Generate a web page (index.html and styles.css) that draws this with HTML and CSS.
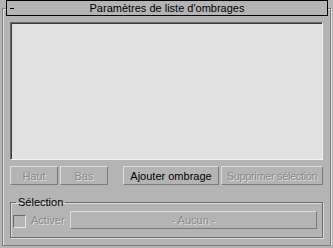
FILE: index.html
```html
<!DOCTYPE html>
<html lang="fr">
<head>
  <meta charset="UTF-8" />
  <title>Paramètres de liste d'ombrages</title>
  <link rel="stylesheet" href="styles.css">
</head>
<body>
  <div class="rollout">
    <div class="rollout-title">
      <span class="toggle"></span>
      <span class="title-text">Paramètres de liste d'ombrages</span>
    </div>
    <div class="rollout-body">
      <div class="listbox"></div>

      <div class="btn-row">
        <button type="button" class="btn btn-move" disabled>Haut</button>
        <button type="button" class="btn btn-move" disabled>Bas</button>
        <button type="button" class="btn btn-add">Ajouter ombrage</button>
        <button type="button" class="btn btn-remove" disabled>Supprimer sélection</button>
      </div>

      <fieldset class="group">
        <legend>Sélection</legend>
        <div class="group-row">
          <label class="check-label">
            <span class="checkbox"></span>
            <span class="disabled-text">Activer</span>
          </label>
          <button type="button" class="btn btn-pick" disabled>- Aucun -</button>
        </div>
      </fieldset>
    </div>
  </div>
</body>
</html>
```

FILE: styles.css
```css
body {
  margin: 0;
  background-color: #b4b4b4;
  font-family: "Liberation Sans", Arial, sans-serif;
  font-size: 11px;
  color: #000;
}
.rollout {
  margin: 8px 2px 0 2px;
  border: 1px solid #7c7c7c;
  box-shadow: inset 1px 1px 0 #e4e4e4, 1px 1px 0 #e4e4e4;
  height: 236px;
}
.rollout-title {
  margin: -9px 2px 0 3px;
  height: 14px;
  border: 1px solid #000;
  background: #b4b4b4;
  display: grid;
  grid-template-columns: 1fr auto 1fr;
  align-items: center;
  line-height: 14px;
}
/* the collapse dash */
.toggle {
  width: 4px;
  height: 1px;
  margin-left: 3px;
  background: #000;
}
.rollout-body {
  padding: 0 7px 6px 7px;
}
.listbox {
  margin-top: 6px;
  height: 136px;
  background: #e1e1e1;
  border: 1px solid;
  border-color: #6a6a6a #f4f4f4 #f4f4f4 #6a6a6a;
  box-shadow: inset 1px 1px 0 #3c3c3c;
}
.btn-row {
  display: flex;
  gap: 2px;
  margin-top: 6px;
  height: 19px;
}
.btn {
  height: 100%;
  padding: 0;
  margin: 0;
  background: #b4b4b4;
  border: 1px solid;
  border-color: #dcdcdc #7a7a7a #7a7a7a #dcdcdc;
  font-family: inherit;
  font-size: 11px;
  color: #000;
  white-space: nowrap;
}
.btn:disabled {
  color: #8a8a8a;
  text-shadow: 1px 1px 0 #dedede;
}
.btn-move { width: 48px; }
.btn-add { width: 96px; margin-left: 13px; }
.btn-remove { width: 102px; letter-spacing: -0.35px; }
.group {
  margin: 11px 0 0 0;
  padding: 2px 5px 8px 2px;
  border: 1px solid #6c6c6c;
  box-shadow: 1px 1px 0 #dadada, inset 1px 1px 0 #dadada;
  min-inline-size: 0;
}
.group legend {
  padding: 0 2px;
  margin-left: 3px;
  line-height: 13px;
}
.group-row {
  display: flex;
  height: 18px;
}
.check-label {
  width: 57px;
  display: flex;
  align-items: center;
  gap: 5px;
}
.checkbox {
  width: 11px;
  height: 11px;
  margin-top: 3px;
  border: 1px solid;
  border-color: #6a6a6a #e8e8e8 #e8e8e8 #6a6a6a;
  background: #b4b4b4;
}
.disabled-text {
  color: #8a8a8a;
  text-shadow: 1px 1px 0 #dedede;
}
.btn-pick {
  flex: 1;
}
```
